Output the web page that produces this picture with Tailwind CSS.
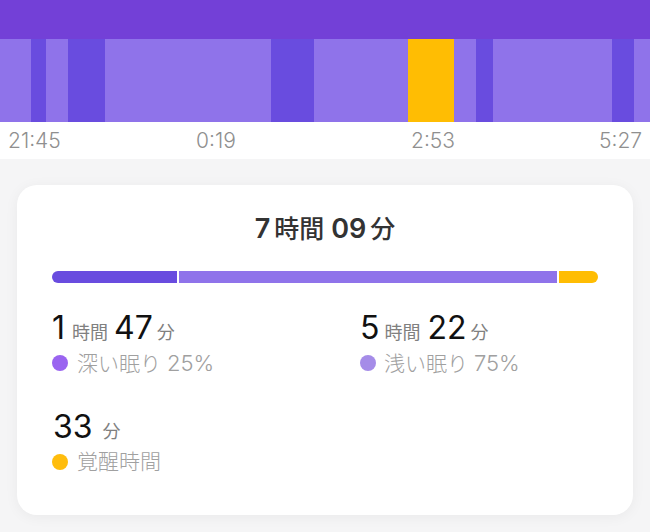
<!DOCTYPE html>
<html lang="ja">
<head>
    <meta charset="UTF-8">
    <meta name="viewport" content="width=device-width, initial-scale=1.0">
    <title>睡眠</title>
    <script src="https://cdn.jsdelivr.net/npm/@tailwindcss/browser@4"></script>
</head>
<body class="w-[650px] h-[532px] overflow-hidden bg-[#f5f5f6] font-['Inter','Noto_Sans_CJK_JP',sans-serif]">
    <!-- top band -->
    <div class="h-[39px] bg-[#7340d7]"></div>

    <!-- sleep stages -->
    <div class="flex h-[83px] bg-[#8f73ea]">
        <div class="w-[31px]"></div>
        <div class="w-[15px] bg-[#694cdf]"></div>
        <div class="w-[22px]"></div>
        <div class="w-[37px] bg-[#694cdf]"></div>
        <div class="w-[166px]"></div>
        <div class="w-[43px] bg-[#694cdf]"></div>
        <div class="w-[94px]"></div>
        <div class="w-[46px] bg-[#ffbd03]"></div>
        <div class="w-[22px]"></div>
        <div class="w-[17px] bg-[#694cdf]"></div>
        <div class="w-[119px]"></div>
        <div class="w-[22px] bg-[#694cdf]"></div>
    </div>

    <!-- time axis -->
    <div class="flex items-center h-[37px] bg-white text-[21px] font-light text-[#8f8f8f] leading-none">
        <span class="ml-[8px] w-[188px]">21:45</span>
        <span class="w-[215px]">0:19</span>
        <span class="w-[188px]">2:53</span>
        <span>5:27</span>
    </div>

    <!-- summary card -->
    <div class="mt-[26px] ml-[17px] w-[616px] h-[330px] rounded-[20px] bg-white shadow-[0_2px_14px_rgba(0,0,0,0.05)] px-[35px] pt-[26px]">
        <div class="flex justify-center items-baseline gap-[4px] h-[36px] font-semibold text-[#333333] text-[27px] leading-[36px]">
            <span>7</span><span class="text-[25px] font-medium">時間</span><span class="ml-[3px]">09</span><span class="text-[25px] font-medium">分</span>
        </div>

        <div class="flex gap-[2px] mt-[24px] w-[546px] h-[12px]">
            <div class="w-[125px] rounded-l-full bg-[#694cdf]"></div>
            <div class="w-[378px] bg-[#8f73ea]"></div>
            <div class="w-[39px] rounded-r-full bg-[#ffbd03]"></div>
        </div>

        <div class="grid grid-cols-[308px_1fr] mt-[26px]">
            <div class="h-[99px]">
                <div class="flex items-baseline h-[38px] text-[32px] leading-[38px] text-[#111111]">
                    <span>1</span><span class="ml-[7px] text-[18px] text-[#808080]">時間</span><span class="ml-[6px]">47</span><span class="ml-[4px] text-[18px] text-[#808080]">分</span>
                </div>
                <div class="flex items-center h-[32px] text-[21px] font-light text-[#a0a0a0]">
                    <span class="w-[16px] h-[16px] rounded-full bg-[#9a64f0] mr-[9px]"></span>
                    <span>深い眠り <span class="text-[22px]">25%</span></span>
                </div>
            </div>
            <div class="h-[99px]">
                <div class="flex items-baseline h-[38px] text-[32px] leading-[38px] text-[#111111]">
                    <span>5</span><span class="ml-[5px] text-[18px] text-[#808080]">時間</span><span class="ml-[7px]">22</span><span class="ml-[4px] text-[18px] text-[#808080]">分</span>
                </div>
                <div class="flex items-center h-[32px] text-[21px] font-light text-[#a0a0a0]">
                    <span class="w-[16px] h-[16px] rounded-full bg-[#a58ce8] mr-[8px]"></span>
                    <span>浅い眠り <span class="text-[22px]">75%</span></span>
                </div>
            </div>
            <div>
                <div class="flex items-baseline h-[38px] text-[32px] leading-[38px] text-[#111111]">
                    <span class="ml-[1px]">33</span><span class="ml-[10px] text-[18px] text-[#808080]">分</span>
                </div>
                <div class="flex items-center h-[32px] text-[21px] font-light text-[#a0a0a0]">
                    <span class="w-[16px] h-[16px] rounded-full bg-[#ffbd0d] mr-[9px]"></span>
                    <span>覚醒時間</span>
                </div>
            </div>
        </div>
    </div>
</body>
</html>
